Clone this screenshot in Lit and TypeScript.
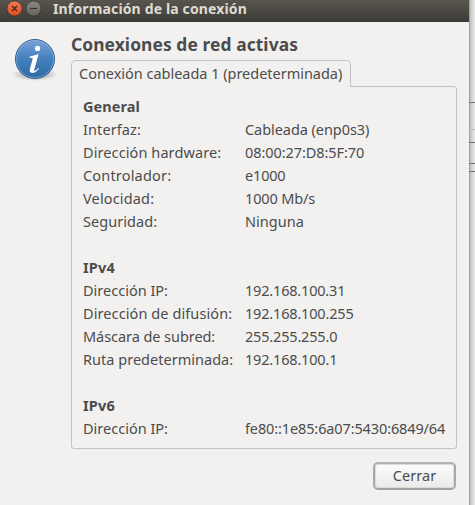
import { LitElement, html, css, svg } from "lit";
import { customElement, property } from "lit/decorators.js";

/** Text tracked so that its line takes the given width. */
@customElement("fit-text")
class FitText extends LitElement {
  @property() text = "";
  @property({ type: Number }) width = 0;

  static styles = css`
    :host { display: block; white-space: nowrap; }
    span { display: inline-block; white-space: pre; }
  `;

  updated() {
    const span = this.renderRoot.querySelector("span") as HTMLElement;
    span.style.letterSpacing = "0px";
    const natural = span.getBoundingClientRect().width;
    span.style.letterSpacing = `${(this.width - natural) / this.text.length}px`;
  }

  render() {
    return html`<span>${this.text}</span>`;
  }
}

type Cell = [string, number];
interface Section { title: Cell; rows: [Cell, Cell][]; }

const SECTIONS: Section[] = [
  {
    title: ["General", 57],
    rows: [
      [["Interfaz:", 58], ["Cableada (enp0s3)", 124.3]],
      [["Dirección hardware:", 138.2], ["08:00:27:D8:5F:70", 119.3]],
      [["Controlador:", 88.2], ["e1000", 40.5]],
      [["Velocidad:", 71.2], ["1000 Mb/s", 70]],
      [["Seguridad:", 74.2], ["Ninguna", 59]],
    ],
  },
  {
    title: ["IPv4", 32],
    rows: [
      [["Dirección IP:", 85], ["192.168.100.31", 100.3]],
      [["Dirección de difusión:", 149.2], ["192.168.100.255", 108.5]],
      [["Máscara de subred:", 132.2], ["255.255.255.0", 92.3]],
      [["Ruta predeterminada:", 150.2], ["192.168.100.1", 92.3]],
    ],
  },
  {
    title: ["IPv6", 32],
    rows: [[["Dirección IP:", 85], ["fe80::1e85:6a07:5430:6849/64", 200.2]]],
  },
];

@customElement("app-root")
class AppRoot extends LitElement {
  static styles = css`
    :host {
      display: flex;
      width: 475px;
      height: 505px;
      overflow: hidden;
      font: 14.5px/23px "Noto Sans", "Open Sans", sans-serif;
      color: #4c4c4c;
      background: #e9e9e9;
    }
    * { box-sizing: border-box; }
    .window { width: 469px; height: 505px; background: #f2f1f0; flex: none; }
    .bar {
      height: 22px;
      display: flex;
      align-items: flex-start;
      background: linear-gradient(#58554d, #3c3b37);
      color: #dfdbd2;
      font-weight: 700;
      font-size: 14px;
      line-height: 18px;
    }
    .controls { width: 53px; height: 18px; flex: none; display: block; }
    .body { display: flex; padding: 10px 12px 0 12px; }
    .info { width: 47px; height: 54px; margin: 1px 12px 0 0; flex: none; display: block; }
    .main { width: 386px; flex: none; }
    .heading { font-size: 17.4px; font-weight: 700; line-height: 24px; height: 28px; }
    .tab {
      position: relative;
      width: 280px;
      height: 27px;
      border: 1px solid #c3c2c0;
      border-bottom: 0;
      border-radius: 5px 5px 0 0;
      background: #f2f1f0;
      padding: 1px 0 0 7px;
      margin-bottom: -1px;
    }
    .panel {
      height: 363px;
      border: 1px solid #c3c2c0;
      border-radius: 0 3px 3px 3px;
      padding: 8px 0 0 11px;
    }
    .section { margin-bottom: 23px; }
    .title { font-weight: 700; }
    .row { display: grid; grid-template-columns: 162px 1fr; height: 23px; }
    .close {
      display: flex;
      justify-content: center;
      width: 83px;
      height: 28px;
      margin: 13px 0 0 302px;
      padding: 0;
      border: 2px solid #a9a8a6;
      border-color: #b4b3b1 #a9a8a6 #a3a2a0;
      border-radius: 5px;
      background: linear-gradient(#fcfcfc, #ebeae9);
      box-shadow: inset 0 0 0 1px #dcdbda;
      font: inherit;
      line-height: 22px;
      align-items: flex-start;
      color: inherit;
    }
    .edge { width: 6px; height: 505px; display: block; }
  `;

  controls() {
    return svg`
      <defs>
        <linearGradient id="red" x2="0" y2="1"><stop stop-color="#f47b55"/><stop offset="1" stop-color="#dd4a1c"/></linearGradient>
        <linearGradient id="gray" x2="0" y2="1"><stop stop-color="#8a8880"/><stop offset="1" stop-color="#65635c"/></linearGradient>
      </defs>
      <circle cx="14.5" cy="8.5" r="7.6" fill="url(#red)" stroke="#35332e" stroke-width=".8"/>
      <path d="M12 6l5 5m0-5l-5 5" stroke="#45281d" stroke-width="1.4"/>
      <circle cx="33.5" cy="8.5" r="7.6" fill="url(#gray)" stroke="#35332e" stroke-width=".8"/>
      <path d="M30 8.5h7" stroke="#35332e" stroke-width="1.1"/>`;
  }

  infoIcon() {
    return svg`
      <defs>
        <linearGradient id="blue" x2="0" y2="1"><stop stop-color="#7ba2d8"/><stop offset=".48" stop-color="#4681bd"/><stop offset="1" stop-color="#2b6aa2"/></linearGradient>
        <radialGradient id="shade"><stop offset=".45" stop-color="#000" stop-opacity=".22"/><stop offset="1" stop-color="#000" stop-opacity="0"/></radialGradient>
      </defs>
      <ellipse cx="23" cy="41.5" rx="23" ry="6.5" fill="url(#shade)"/>
      <circle cx="23" cy="26" r="19.5" fill="url(#blue)" stroke="#2f6297"/>
      <circle cx="23" cy="26" r="18.5" fill="none" stroke="#a9c7e8" stroke-opacity=".5" stroke-width=".9"/>
      <circle cx="25.6" cy="15.4" r="2.6" fill="#fff"/>
      <path d="M17.7 23.6Q22 22.8 25.8 21.3L26.5 21.5L22.4 36.2Q21.9 38.1 22.6 38.1Q23.9 37.9 26.2 34.9L27 35.5Q23.7 40 20.1 40Q16.9 39.7 17.9 36.1L20.7 25.8Q21 24.5 17.7 24.7Z" fill="#fff"/>`;
  }

  edge() {
    return svg`
      <defs><linearGradient id="fade"><stop stop-color="#ababab"/><stop offset=".3" stop-color="#c8c8c8"/><stop offset="1" stop-color="#ececec"/></linearGradient></defs>
      <path d="M0 0h6v505h-6z" fill="url(#fade)"/>
      <path d="M0 0h1v505h-1z" fill="#a3a3a3"/>
      <path d="M0 102.5h6" stroke="#737980"/>
      <path d="M0 129.5h6" stroke="#bdbdbd"/>
      <path d="M0 142.5h6M0 163.5h6M0 171.5h6" stroke="#707070"/>`;
  }

  text([text, width]: Cell) {
    return html`<fit-text .text=${text} .width=${width}></fit-text>`;
  }

  render() {
    return html`
      <div class="window">
        <div class="bar">
          <svg class="controls" viewBox="0 0 53 18">${this.controls()}</svg>
          ${this.text(["Información de la conexión", 194])}
        </div>
        <div class="body">
          <svg class="info" viewBox="0 0 47 54">${this.infoIcon()}</svg>
          <div class="main">
            <div class="heading">${this.text(["Conexiones de red activas", 227])}</div>
            <div class="tab">${this.text(["Conexión cableada 1 (predeterminada)", 263.3])}</div>
            <div class="panel">
              ${SECTIONS.map((s) => html`
                <div class="section">
                  <div class="title">${this.text(s.title)}</div>
                  ${s.rows.map(([label, value]) => html`
                    <div class="row">${this.text(label)}${this.text(value)}</div>`)}
                </div>`)}
            </div>
            <button class="close">${this.text(["Cerrar", 43.5])}</button>
          </div>
        </div>
      </div>
      <svg class="edge" viewBox="0 0 6 505">${this.edge()}</svg>
    `;
  }
}
